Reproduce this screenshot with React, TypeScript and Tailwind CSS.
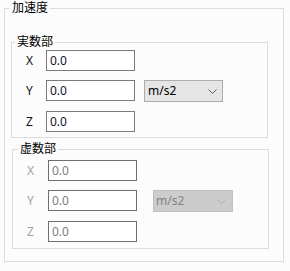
import React from "react";

const font = "font-['Noto_Sans','Noto_Sans_CJK_JP',sans-serif]";

function Chevron({ color }: { color: string }) {
  return (
    <svg width="9" height="5" viewBox="0 0 9 5" className="shrink-0">
      <path d="M0.5 0.5 L4.5 4.5 L8.5 0.5" fill="none" stroke={color} strokeWidth="1" />
    </svg>
  );
}

function Row({
  label,
  disabled,
  labelW,
  children,
}: {
  label: string;
  disabled?: boolean;
  labelW: string;
  children?: React.ReactNode;
}) {
  return (
    <div className="flex items-start">
      <span
        className={`${labelW} h-[21px] leading-[21px] text-[12px] ${
          disabled ? "text-[#a3a3a3]" : "text-[#101020]"
        }`}
      >
        {label}
      </span>
      <input
        defaultValue="0.0"
        disabled={disabled}
        className={`w-[89px] h-[21px] border bg-white pl-[3px] text-[12px] outline-none ${
          disabled ? "border-[#6e6e6e] text-[#7c7c86]" : "border-[#7a7a7a] text-[#101030]"
        }`}
      />
      {children}
    </div>
  );
}

export default function App() {
  return (
    <div className={`w-[290px] h-[271px] bg-[#fbfcfb] ${font}`}>
      <fieldset className="ml-[4px] w-[280px] h-[262px] border border-[#dcdcdc] p-0 m-0">
        <legend className="ml-[5px] px-[2px] text-[12px] leading-[16px] text-black">加速度</legend>

        <fieldset className="mt-[18px] ml-[6px] w-[257px] h-[104px] border border-[#dcdcdc] p-0">
          <legend className="ml-[3px] px-[2px] text-[12px] leading-[16px] text-black">実数部</legend>
          <div className="flex flex-col gap-[9px] pl-[14px]">
            <Row label="X" labelW="w-[20px]" />
            <Row label="Y" labelW="w-[20px]">
              <div className="ml-[9px] w-[79px] h-[22px] border border-[#adadad] bg-[#e5e5e5] flex items-center justify-between pl-[3px] pr-[5px]">
                <span className="text-[12px] text-black leading-none">m/s2</span>
                <Chevron color="#606060" />
              </div>
            </Row>
            <Row label="Z" labelW="w-[20px]" />
          </div>
        </fieldset>

        <fieldset className="mt-[3px] ml-[7px] w-[257px] h-[108px] border border-[#dcdcdc] p-0">
          <legend className="ml-[5px] px-[2px] text-[12px] leading-[16px] text-black">虚数部</legend>
          <div className="flex flex-col gap-[9px] pl-[14px] pt-[3px]">
            <Row label="X" labelW="w-[21px]" disabled />
            <Row label="Y" labelW="w-[21px]" disabled>
              <div className="ml-[16px] w-[80px] h-[22px] border border-[#bfbfbf] bg-[#cccccc] flex items-center justify-between pl-[2px] pr-[6px]">
                <span className="text-[12px] text-[#838383] leading-none">m/s2</span>
                <Chevron color="#b0b0b0" />
              </div>
            </Row>
            <Row label="Z" labelW="w-[21px]" disabled />
          </div>
        </fieldset>
      </fieldset>
    </div>
  );
}
